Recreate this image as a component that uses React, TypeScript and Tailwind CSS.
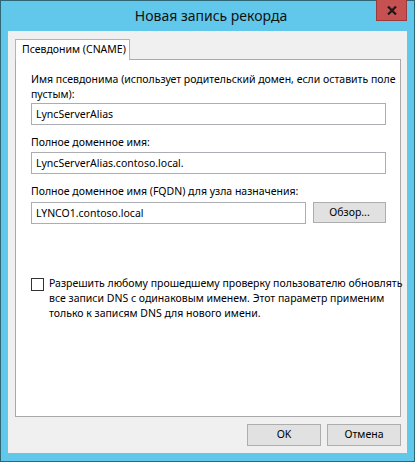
import React from "react";

export default function App() {
  return (
    <div className="w-[415px] h-[462px] bg-[#62c8eb] border border-[#2f6676] flex flex-col font-['Noto_Sans',sans-serif] text-black select-none">
      <div className="relative h-[30px] shrink-0 flex items-center justify-center pl-[7px]">
        <span className="text-[14px] leading-none text-[#111]">Новая запись рекорда</span>
        <div className="absolute top-[-1px] right-[7px] w-[31px] h-[21px] bg-[#c75050] border border-[#9b3a3a] border-t-0 flex items-center justify-center">
          <svg width="10" height="9" viewBox="0 0 10 9">
            <path d="M1 0.5 L9 8.5 M9 0.5 L1 8.5" stroke="#1a1a1a" strokeWidth="2.2" />
          </svg>
        </div>
      </div>
      <div className="mx-[7px] h-[422px] bg-[#f0f0f0] flex flex-col pt-[8px] pl-[7px] pr-[6px]">
        <div className="relative z-10 -mb-px w-[115px] h-[21px] bg-white border border-b-0 border-[#b4b4b4] flex items-center pl-[6px] text-[10.5px] whitespace-nowrap">
          Псевдоним (CNAME)
        </div>
        <div className="h-[358px] bg-white border border-[#a9a9a9] flex flex-col pt-[12px] pl-[15px] pr-[14px] text-[10.5px] leading-[15px]">
          <div className="whitespace-nowrap">
            Имя псевдонима (использует родительский домен, если оставить поле
            <br />
            пустым):
          </div>
          <div className="mt-[1px] h-[22px] border border-[#abadb3] flex items-center pl-[4px]">LyncServerAlias</div>
          <div className="mt-[10px] whitespace-nowrap">Полное доменное имя:</div>
          <div className="mt-[2px] h-[22px] border border-[#abadb3] flex items-center pl-[4px]">LyncServerAlias.contoso.local.</div>
          <div className="mt-[10px] whitespace-nowrap">Полное доменное имя (FQDN) для узла назначения:</div>
          <div className="mt-[3px] flex gap-[7px]">
            <div className="w-[275px] h-[22px] border border-[#abadb3] flex items-center pl-[4px]">LYNCO1.contoso.local</div>
            <div className="flex-1 h-[21px] bg-[#e1e1e1] border border-[#adadad] flex items-center justify-center">Обзор...</div>
          </div>
          <div className="mt-[52px] flex gap-[5px]">
            <div className="mt-[2px] w-[13px] h-[13px] shrink-0 border border-[#333] bg-white" />
            <div className="whitespace-nowrap">
              Разрешить любому прошедшему проверку пользователю обновлять
              <br />
              все записи DNS с одинаковым именем. Этот параметр применим
              <br />
              только к записям DNS для нового имени.
            </div>
          </div>
        </div>
        <div className="mt-[7px] flex justify-end gap-[6px] text-[10.5px]">
          <div className="w-[74px] h-[22px] bg-[#e1e1e1] border border-[#adadad] flex items-center justify-center">OK</div>
          <div className="w-[74px] h-[22px] bg-[#e1e1e1] border border-[#adadad] flex items-center justify-center">Отмена</div>
        </div>
      </div>
    </div>
  );
}
